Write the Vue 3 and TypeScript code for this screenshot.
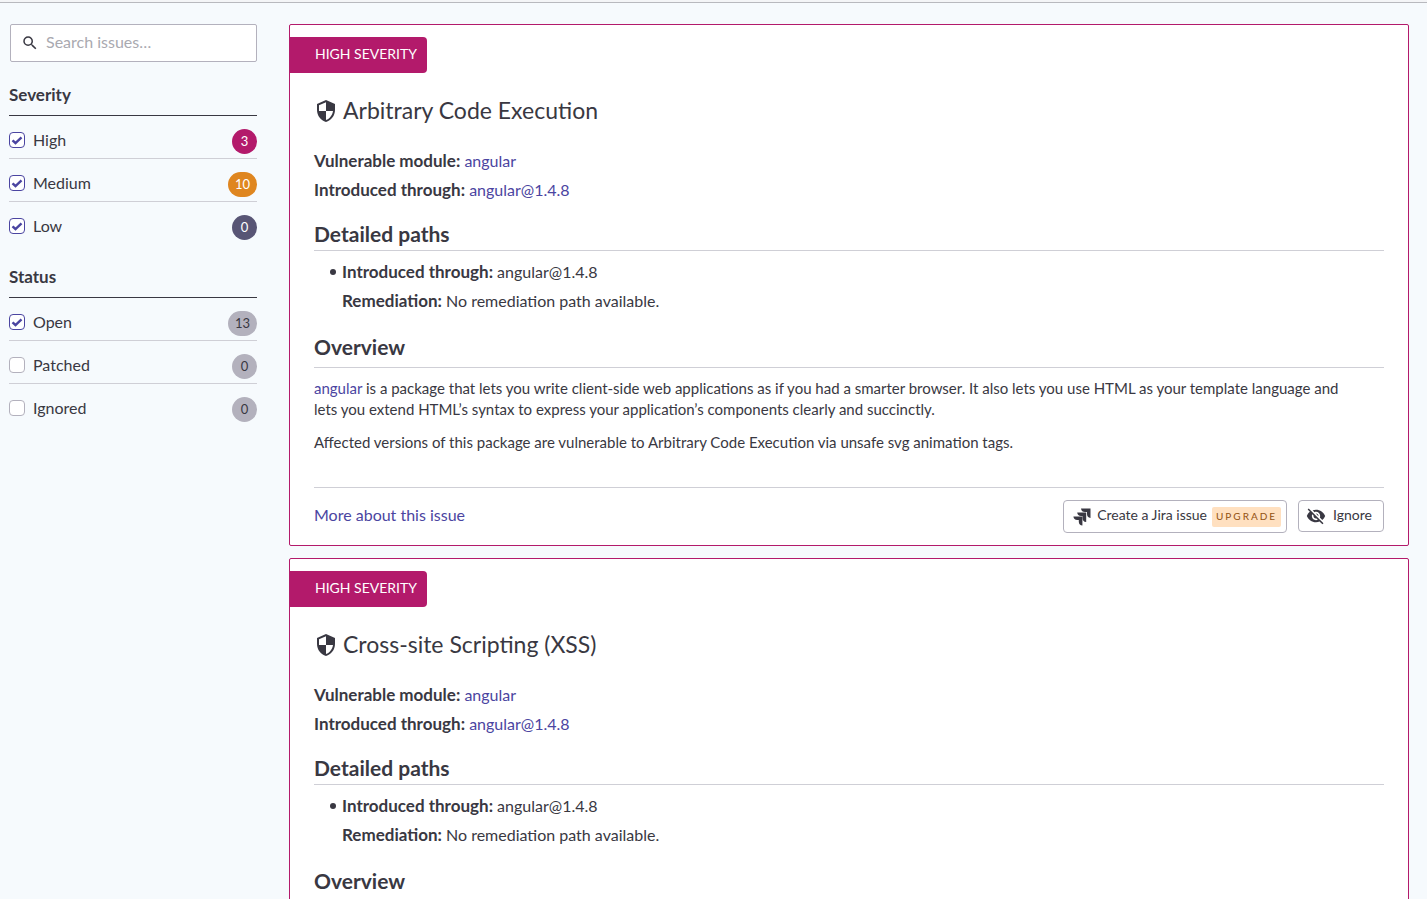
<script setup lang="ts">
import { ref } from 'vue'

interface Filter {
  id: string
  label: string
  count: number
  tone: string
  checked: boolean
}

interface FilterGroup {
  title: string
  filters: Filter[]
}

interface Issue {
  title: string
  module: string
  version: string
  summary: string
}

const query = ref('')

const groups = ref<FilterGroup[]>([
  {
    title: 'Severity',
    filters: [
      { id: 'high', label: 'High', count: 3, tone: 'high', checked: true },
      { id: 'medium', label: 'Medium', count: 10, tone: 'medium', checked: true },
      { id: 'low', label: 'Low', count: 0, tone: 'low', checked: true },
    ],
  },
  {
    title: 'Status',
    filters: [
      { id: 'open', label: 'Open', count: 13, tone: 'neutral', checked: true },
      { id: 'patched', label: 'Patched', count: 0, tone: 'neutral', checked: false },
      { id: 'ignored', label: 'Ignored', count: 0, tone: 'neutral', checked: false },
    ],
  },
])

const issues: Issue[] = [
  {
    title: 'Arbitrary Code Execution',
    module: 'angular',
    version: 'angular@1.4.8',
    summary:
      'Affected versions of this package are vulnerable to Arbitrary Code Execution via unsafe svg animation tags.',
  },
  {
    title: 'Cross-site Scripting (XSS)',
    module: 'angular',
    version: 'angular@1.4.8',
    summary: 'Affected versions of this package are vulnerable to Cross-site Scripting (XSS).',
  },
]
</script>

<template>
  <div class="page">
    <header class="topbar"></header>
    <div class="layout">
      <aside class="sidebar">
        <label class="search">
          <svg class="search-icon" viewBox="0 0 24 24" aria-hidden="true">
            <path d="M15.5 14h-.79l-.28-.27A6.47 6.47 0 0 0 16 9.5 6.5 6.5 0 1 0 9.5 16c1.61 0 3.09-.59 4.23-1.57l.27.28v.79l5 4.99L20.49 19l-4.99-5zm-6 0C7.01 14 5 11.99 5 9.5S7.01 5 9.5 5 14 7.01 14 9.5 11.99 14 9.5 14z" />
          </svg>
          <input v-model="query" class="search-input" type="text" placeholder="Search issues…" aria-label="Search issues" />
        </label>

        <section v-for="group in groups" :key="group.title" class="group">
          <h2 class="group-title">{{ group.title }}</h2>
          <ul class="filters">
            <li v-for="filter in group.filters" :key="filter.id" class="filter">
              <input :id="filter.id" v-model="filter.checked" class="check" type="checkbox" />
              <label class="filter-label" :for="filter.id">{{ filter.label }}</label>
              <span class="count" :class="filter.tone">{{ filter.count }}</span>
            </li>
          </ul>
        </section>
      </aside>

      <main class="issues">
        <article v-for="issue in issues" :key="issue.title" class="card">
          <div class="severity">HIGH SEVERITY</div>
          <div class="body">
            <h2 class="title">
              <svg class="shield" viewBox="0 0 24 24" aria-hidden="true">
                <path d="M12 1 3 5v6c0 5.55 3.84 10.74 9 12 5.16-1.26 9-6.45 9-12V5l-9-4zm0 10.99h7c-.53 4.12-3.28 7.79-7 8.94V12H5V6.3l7-3.11v8.8z" />
              </svg>
              <span class="title-text">{{ issue.title }}</span>
            </h2>
            <p class="line"><strong>Vulnerable module:</strong> <a href="#module">{{ issue.module }}</a></p>
            <p class="line"><strong>Introduced through:</strong> <a href="#through">{{ issue.version }}</a></p>

            <h3 class="heading paths-heading">Detailed paths</h3>
            <ul class="paths">
              <li class="path">
                <div>
                  <p class="line"><strong>Introduced through:</strong> {{ issue.version }}</p>
                  <p class="line"><strong>Remediation:</strong> No remediation path available.</p>
                </div>
              </li>
            </ul>

            <h3 class="heading overview-heading">Overview</h3>
            <p class="text">
              <a href="#module">{{ issue.module }}</a> is a package that lets you write client-side web applications as if you had a
              smarter browser. It also lets you use HTML as your template language and lets you extend HTML’s syntax to express your
              application’s components clearly and succinctly.
            </p>
            <p class="text">{{ issue.summary }}</p>

            <footer class="actions">
              <a class="more" href="#more">More about this issue</a>
              <button class="button jira" type="button">
                <svg class="jira-icon" viewBox="0 0 18 18" aria-hidden="true">
                  <path d="M8 .5h9.500V10A4 4 0 0 1 14 6V4h-2A4 4 0 0 1 8 .5z" />
                  <path d="M4.200 4.500h9V14a4 4 0 0 1-3.700-4V8.100H8a4 4 0 0 1-3.800-3.600z" />
                  <path d="M.4 8.600h9v9A4 4 0 0 1 5.800 14v-1.900H4.200A4 4 0 0 1 .4 8.600z" />
                </svg>
                <span class="button-text">Create a Jira issue</span>
                <span class="upgrade">UPGRADE</span>
              </button>
              <button class="button ignore" type="button">
                <svg class="eye" viewBox="0 0 24 24" aria-hidden="true">
                  <path d="M12 7c2.760 0 5 2.240 5 5 0 .65-.13 1.260-.36 1.830l2.920 2.920c1.510-1.260 2.700-2.890 3.430-4.750-1.730-4.390-6-7.500-11-7.500-1.400 0-2.740.25-3.980.7l2.160 2.160C10.740 7.130 11.350 7 12 7zM2 4.270l2.280 2.280.46.46C3.080 8.300 1.780 10.020 1 12c1.730 4.390 6 7.500 11 7.500 1.550 0 3.030-.3 4.380-.84l.42.42L19.730 22 21 20.730 3.270 3 2 4.270zM7.530 9.800l1.550 1.550c-.05.21-.08.43-.08.65 0 1.660 1.340 3 3 3 .22 0 .44-.03.65-.08l1.550 1.550c-.67.33-1.410.53-2.200.53-2.760 0-5-2.240-5-5 0-.79.2-1.530.53-2.200zm4.310-.78 3.150 3.150.02-.16c0-1.660-1.340-3-3-3l-.17.01z" />
                </svg>
                <span class="button-text">Ignore</span>
              </button>
            </footer>
          </div>
        </article>
      </main>
    </div>
  </div>
</template>

<style>
html {
  scrollbar-width: none;
}

body {
  margin: 0;
  background: #f6fafd;
}
</style>

<style scoped>
* {
  box-sizing: border-box;
}

.page {
  color: #393842;
  font: 16px/21px Lato, "Noto Sans", sans-serif;
}

h2,
h3,
p,
ul {
  margin: 0;
  padding: 0;
}

a {
  color: #4b45a1;
  text-decoration: none;
}

input,
button {
  margin: 0;
  color: inherit;
  font: inherit;
}

.topbar {
  height: 3px;
  background: #f4f5f7;
  border-bottom: 1px solid #b8b9be;
}

.layout {
  display: flex;
  gap: 32px;
  padding: 21px 18px 0 9px;
}

.sidebar {
  flex: 0 0 248px;
}

.search {
  display: flex;
  align-items: center;
  height: 38px;
  margin-left: 1px;
  padding-left: 10px;
  background: #fff;
  border: 1px solid #b3b1bd;
  border-radius: 2px;
}

.search-icon {
  flex: none;
  width: 18px;
  height: 18px;
  fill: #393842;
}

.search-input {
  flex: 1;
  min-width: 0;
  padding: 0 7px 3px;
  background: transparent;
  border: 0;
  outline: 0;
}

.search-input::placeholder {
  color: #a9a9b0;
  opacity: 1;
}

.group {
  padding-top: 22px;
}

.group-title {
  height: 32px;
  font-size: 17px;
  line-height: 22px;
  border-bottom: 1px solid #393842;
}

.filters {
  list-style: none;
}

.filter {
  display: flex;
  align-items: center;
  height: 43px;
  padding-top: 8px;
  border-bottom: 1px solid #cfcfd6;
}

.filter:last-child {
  height: 42px;
  border-bottom: 0;
}

.check {
  flex: none;
  width: 16px;
  height: 16px;
  margin-bottom: 2px;
  appearance: none;
  background: #fff;
  border: 1px solid #b3b1bd;
  border-radius: 4px;
}

.check:checked {
  background: #fff url("data:image/svg+xml,%3Csvg xmlns='http://www.w3.org/2000/svg' viewBox='0 0 14 14'%3E%3Cpath d='M2.500 7.300 5.500 10 11.500 4.300' fill='none' stroke='%234b45a1' stroke-width='2.400'/%3E%3C/svg%3E") center / 14px 14px no-repeat;
  border-color: #4b45a1;
}

.filter-label {
  flex: 1;
  margin-left: 8px;
  padding-bottom: 3px;
}

.count {
  min-width: 25px;
  height: 25px;
  padding: 0 7px;
  border-radius: 13px;
  font-size: 13px;
  line-height: 25px;
  text-align: center;
  color: #fff;
}

.high {
  background: #b31a6b;
}

.medium {
  background: #df8620;
}

.low {
  background: #585575;
}

.neutral {
  color: #393842;
  background: #b3b1bd;
}

.issues {
  display: flex;
  flex: 1;
  flex-direction: column;
  gap: 12px;
  min-width: 0;
}

.card {
  padding: 12px 0;
  background: #fff;
  border: 1px solid #b31a6b;
  border-radius: 2px;
}

.severity {
  width: fit-content;
  padding: 0 10px 2px 25px;
  color: #fff;
  font-size: 14px;
  line-height: 34px;
  background: #b31a6b;
  border-radius: 0 4px 4px 0;
}

.body {
  padding: 0 24px;
}

.title {
  display: flex;
  align-items: center;
  gap: 5px;
  margin: 22px 0 19px;
  font-size: 23px;
  font-weight: 400;
  line-height: 30px;
}

.title-text {
  padding-bottom: 2px;
}

.shield {
  width: 24px;
  height: 24px;
  fill: #393842;
}

.line {
  height: 29px;
  line-height: 29px;
}

.line strong {
  font-size: 17px;
}

.heading {
  font-size: 21px;
  line-height: 22px;
  border-bottom: 1px solid #cfcfd6;
}

.paths-heading {
  margin: 19px 0 6px;
  padding-bottom: 5px;
}

.paths {
  padding-left: 16px;
  list-style: none;
}

.path {
  display: flex;
  gap: 6px;
}

.path::before {
  width: 6px;
  height: 6px;
  margin-top: 12px;
  background: #393842;
  border-radius: 50%;
  content: "";
}

.overview-heading {
  margin: 21px 0 10px;
  padding-bottom: 9px;
}

.text {
  padding-right: 28px;
  font-size: 15px;
}

.text + .text {
  margin-top: 12px;
}

.actions {
  display: flex;
  align-items: flex-start;
  margin-top: 34px;
  padding-top: 12px;
  border-top: 1px solid #cfcfd6;
}

.more {
  margin-right: auto;
  line-height: 30px;
}

.button {
  display: flex;
  align-items: center;
  height: 32px;
  background: #fff;
  border: 1px solid #b3b1bd;
  border-radius: 4px;
  font-size: 14px;
  line-height: 20px;
}

.button-text {
  padding-bottom: 3px;
}

.jira {
  height: 33px;
  margin-right: 11px;
  padding: 0 5px 0 9px;
}

.jira-icon {
  width: 18px;
  height: 18px;
  margin-right: 6px;
  fill: #393842;
}

.upgrade {
  margin-left: 5px;
  padding: 0 4px 2px;
  color: #925011;
  font-size: 10px;
  line-height: 18px;
  letter-spacing: 2px;
  background: #ffe0c0;
  border-radius: 2px;
}

.ignore {
  padding: 0 11px 0 7px;
}

.eye {
  width: 20px;
  height: 20px;
  margin-right: 7px;
  fill: #393842;
}
</style>
